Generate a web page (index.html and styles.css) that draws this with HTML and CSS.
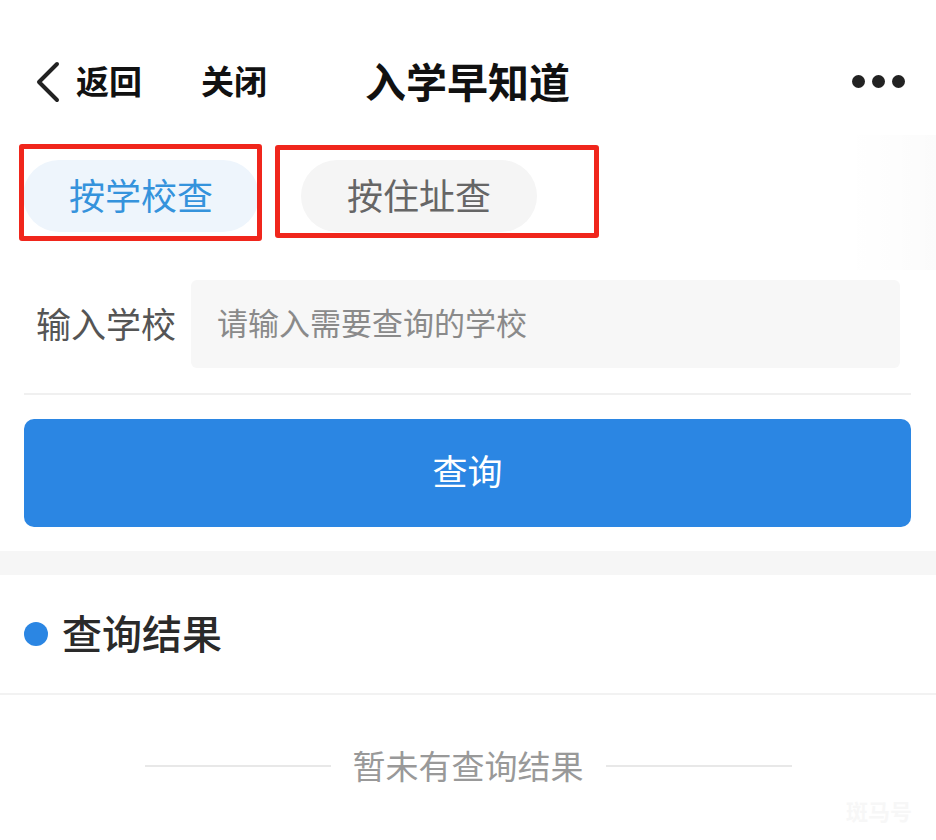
FILE: index.html
```html
<!DOCTYPE html>
<html lang="zh-CN">
<head>
    <meta charset="UTF-8">
    <meta name="viewport" content="width=device-width, initial-scale=1.0">
    <title>入学早知道</title>
    <link rel="stylesheet" href="styles.css">
</head>
<body>
    <div class="page">
        <!-- Top navigation -->
        <header class="nav">
            <div class="nav-left">
                <span class="nav-back">
                    <svg width="26" height="42" viewBox="0 0 26 42"><polyline points="22,3 4,21 22,39" fill="none" stroke="#222" stroke-width="4" stroke-linecap="round" stroke-linejoin="round"/></svg>
                    <span>返回</span>
                </span>
                <span class="nav-close">关闭</span>
            </div>
            <h1 class="nav-title">入学早知道</h1>
            <div class="nav-more">
                <i></i><i></i><i></i>
            </div>
        </header>

        <!-- Search mode tabs -->
        <div class="tabs">
            <div class="tab tab-active">按学校查</div>
            <div class="tab">按住址查</div>
        </div>

        <!-- Search form -->
        <div class="form">
            <div class="form-row">
                <label class="form-label">输入学校</label>
                <div class="form-input">请输入需要查询的学校</div>
            </div>
            <button class="btn-query">查询</button>
        </div>

        <div class="spacer"></div>

        <!-- Results -->
        <div class="result-head">
            <span class="result-dot"></span>
            <span class="result-title">查询结果</span>
        </div>
        <div class="empty">
            <span class="empty-line"></span>
            <span class="empty-text">暂未有查询结果</span>
            <span class="empty-line"></span>
        </div>

        <!-- Annotation boxes -->
        <div class="mark mark-1"></div>
        <div class="mark mark-2"></div>
        <div class="edge-shade"></div>
        <div class="watermark">斑马号</div>
    </div>
</body>
</html>
```

FILE: styles.css
```css
* {
    margin: 0;
    padding: 0;
    box-sizing: border-box;
}

body {
    font-family: "Noto Sans CJK SC", "Noto Sans", sans-serif;
    background: #fff;
    color: #333;
}

.page {
    position: relative;
    width: 936px;
    height: 840px;
    overflow: hidden;
}

/* Navigation */
.nav {
    display: flex;
    align-items: center;
    height: 86px;
    margin-top: 37px;
    padding: 0 31px 0 35px;
}

.nav-left {
    display: flex;
    align-items: center;
    width: 330px;
}

.nav-back {
    display: flex;
    align-items: center;
    gap: 15px;
    font-size: 33px;
    font-weight: 700;
    color: #111;
}

.nav-back svg {
    margin-top: 3px;
}

.nav-close {
    margin-left: 59px;
    font-size: 33px;
    font-weight: 700;
    color: #111;
}

.nav-title {
    flex: 1;
    font-size: 41px;
    font-weight: 700;
    color: #111;
}

.nav-more {
    display: flex;
    gap: 7px;
    margin-top: 3px;
}

.nav-more i {
    display: block;
    width: 13px;
    height: 13px;
    border-radius: 50%;
    background: #222;
}

/* Tabs */
.tabs {
    display: flex;
    gap: 42px;
    padding: 37px 0 0 23px;
}

.tab {
    height: 72px;
    line-height: 68px;
    padding: 0 46px;
    border-radius: 36px;
    background: #f5f5f5;
    color: #666;
    font-size: 36px;
}

.tab-active {
    background: #eef5fc;
    color: #3593dc;
}

/* Form */
.form {
    padding: 0 25px 0 24px;
}

.form-row {
    display: flex;
    align-items: center;
    gap: 15px;
    margin-top: 48px;
    padding: 0 11px 25px 12px;
    border-bottom: 2px solid #f0f0f0;
}

.form-label {
    font-size: 35px;
    color: #555;
    margin-bottom: 3px;
}

.form-input {
    flex: 1;
    height: 88px;
    line-height: 84px;
    padding-left: 26px;
    border-radius: 6px;
    background: #f7f7f7;
    color: #8a8a8a;
    font-size: 31px;
}

.btn-query {
    display: block;
    width: 100%;
    height: 108px;
    margin-top: 24px;
    padding-bottom: 7px;
    border: none;
    border-radius: 10px;
    background: #2b86e3;
    color: #fff;
    font-family: inherit;
    font-size: 35px;
}

.spacer {
    height: 24px;
    margin-top: 24px;
    background: #f6f6f6;
}

/* Results */
.result-head {
    display: flex;
    align-items: center;
    gap: 14px;
    height: 120px;
    padding-left: 24px;
    border-bottom: 2px solid #f2f2f2;
}

.result-dot {
    width: 24px;
    height: 24px;
    border-radius: 50%;
    background: #2b86e3;
}

.result-title {
    font-size: 40px;
    font-weight: 500;
    color: #2a2a2a;
    margin-bottom: 5px;
}

.empty {
    display: flex;
    align-items: center;
    justify-content: center;
    gap: 22px;
    margin-top: 48px;
    height: 44px;
}

.empty-line {
    width: 186px;
    height: 2px;
    background: #e8e8e8;
    margin-top: 2px;
}

.empty-text {
    font-size: 33px;
    color: #999;
}

/* Overlays */
.mark {
    position: absolute;
    border: 5px solid #f0261c;
    border-radius: 3px;
}

.mark-1 {
    left: 19px;
    top: 144px;
    width: 243px;
    height: 97px;
}

.mark-2 {
    left: 275px;
    top: 145px;
    width: 324px;
    height: 93px;
}

.edge-shade {
    position: absolute;
    right: 0;
    top: 135px;
    width: 90px;
    height: 135px;
    background: linear-gradient(to right, rgba(0, 0, 0, 0), rgba(0, 0, 0, 0.015));
}

.watermark {
    position: absolute;
    right: 24px;
    bottom: 14px;
    font-size: 22px;
    font-weight: 700;
    color: #f7f7f7;
}
```
